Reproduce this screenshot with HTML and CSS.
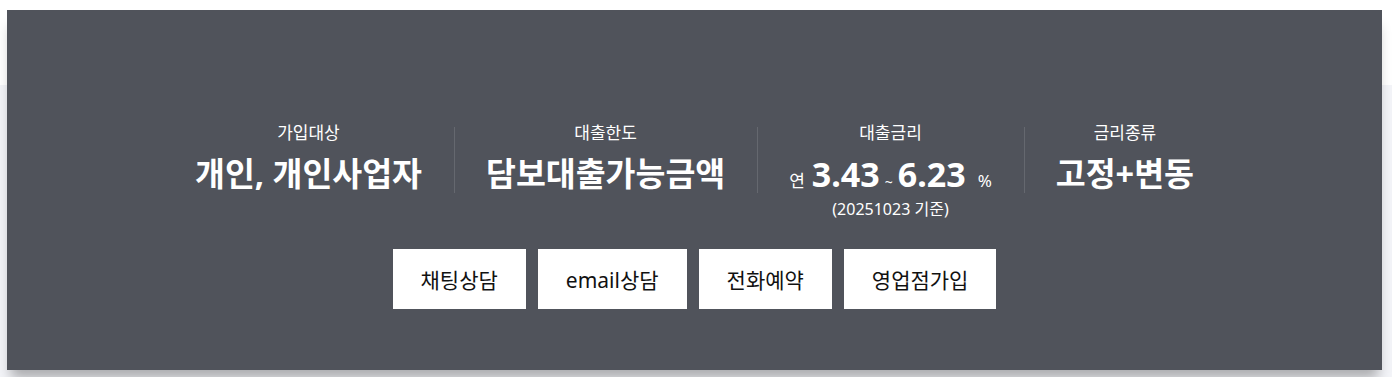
FILE: index.html
```html
<!DOCTYPE html>
<html lang="ko">
<head>
    <meta charset="UTF-8">
    <meta name="viewport" content="width=device-width, initial-scale=1.0">
    <title>상품 요약</title>
    <link rel="stylesheet" href="styles.css">
</head>
<body>
    <!-- 상품 요약 박스 -->
    <div id="summary">

        <ul id="summary-list">
            <li class="summary-item">
                <p class="item-label">가입대상</p>
                <p class="item-value">개인, 개인사업자</p>
            </li>
            <li class="summary-item">
                <p class="item-label">대출한도</p>
                <p class="item-value">담보대출가능금액</p>
            </li>
            <li class="summary-item">
                <p class="item-label">대출금리</p>
                <p class="item-value rate"><span class="unit">연</span><span class="num">3.43</span><span class="tilde">~</span><span class="num">6.23</span><span class="unit pct">%</span></p>
                <p class="item-note">(20251023 기준)</p>
            </li>
            <li class="summary-item">
                <p class="item-label">금리종류</p>
                <p class="item-value">고정+변동</p>
            </li>
        </ul>

        <!-- 버튼 -->
        <div id="actions">
            <a class="action-btn" href="#">채팅상담</a>
            <a class="action-btn" href="#">email상담</a>
            <a class="action-btn" href="#">전화예약</a>
            <a class="action-btn" href="#">영업점가입</a>
        </div>

    </div>
</body>
</html>
```

FILE: styles.css
```css
body {
    font-family: "Noto Sans", "Noto Sans CJK KR", sans-serif;
    margin: 0;
    padding: 10px 10px 0 7px;
    height: 377px;
    box-sizing: border-box;
    overflow: hidden;
    background: linear-gradient(#ffffff 0, #ffffff 85px, #f3f4f8 85px);
}

#summary {
    height: 360px;
    box-sizing: border-box;
    padding-top: 111px;
    background: #50535b;
    color: #ffffff;
    box-shadow: 0 12px 12px -4px rgba(0, 0, 0, 0.3);
}

#summary-list {
    list-style: none;
    margin: 0;
    padding: 0;
    display: flex;
    justify-content: center;
    align-items: flex-start;
}

.summary-item {
    position: relative;
    padding: 0 32px;
    text-align: center;
}

/* 구분선 */
.summary-item + .summary-item::before {
    content: "";
    position: absolute;
    left: 0;
    top: 6px;
    height: 66px;
    border-left: 1px solid #65686f;
}

.summary-item p {
    margin: 0;
}

.item-label {
    font-size: 17px;
    line-height: 24px;
}

.item-value {
    margin-top: 8px !important;
    font-size: 32.5px;
    font-weight: bold;
    line-height: 42px;
    white-space: nowrap;
}

.rate .num {
    font-size: 34px;
}

.rate .unit {
    font-size: 17px;
    font-weight: normal;
    margin-right: 7px;
}

.rate .pct {
    margin: 0 0 0 12px;
}

.rate .tilde {
    font-size: 14px;
    font-weight: normal;
    margin: 0 5px;
}

.item-note {
    margin-top: -4px !important;
    font-size: 16px;
    line-height: 20px;
}

#actions {
    display: flex;
    justify-content: center;
    gap: 12px;
    margin-top: 30px;
}

.action-btn {
    display: flex;
    align-items: center;
    height: 60px;
    padding: 0 28px;
    background: #ffffff;
    color: #111111;
    font-size: 21px;
    text-decoration: none;
}
```
